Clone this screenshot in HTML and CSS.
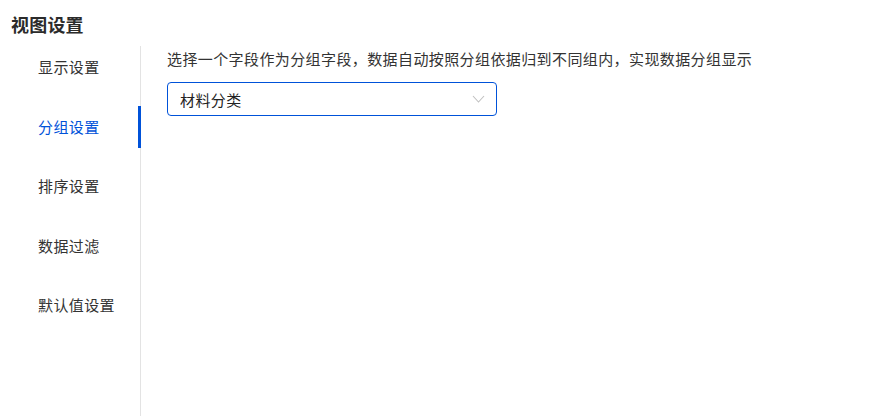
FILE: index.html
```html
<!DOCTYPE html>
<html lang="zh-CN">
<head>
    <meta charset="UTF-8">
    <title>视图设置</title>
    <link rel="stylesheet" href="styles.css">
</head>
<body>
    <div class="page">
        <h1 class="title">视图设置</h1>
        <div class="layout">
            <!-- 左侧菜单 -->
            <ul class="menu">
                <li class="menu-item">显示设置</li>
                <li class="menu-item active">分组设置</li>
                <li class="menu-item">排序设置</li>
                <li class="menu-item">数据过滤</li>
                <li class="menu-item">默认值设置</li>
            </ul>
            <!-- 分组设置内容 -->
            <div class="content">
                <p class="desc">选择一个字段作为分组字段，数据自动按照分组依据归到不同组内，实现数据分组显示</p>
                <div class="select">
                    <span class="select-value">材料分类</span>
                    <svg class="select-arrow" width="13" height="8" viewBox="0 0 13 8">
                        <path d="M1 1l5.5 6L12 1" fill="none" stroke="#c0c0c0" stroke-width="1.1"/>
                    </svg>
                </div>
            </div>
        </div>
    </div>
</body>
</html>
```

FILE: styles.css
```css
html, body {
    margin: 0;
    height: 100%;
    background-color: #fff;
}
body {
    font-family: "Noto Sans CJK SC", "Noto Sans", sans-serif;
    color: #333;
    font-size: 15px;
    letter-spacing: 0.4px;
}
.page {
    display: flex;
    flex-direction: column;
    height: 100%;
}
.title {
    margin: 0;
    padding: 11px 0 0 11px;
    height: 35px;
    font-size: 18px;
    line-height: 26px;
    font-weight: bold;
    letter-spacing: 0.2px;
    color: #2b2b2b;
}
.layout {
    flex: 1;
    display: flex;
}
.menu {
    list-style: none;
    margin: 0;
    padding: 0;
    width: 140px;
    border-right: 1px solid #e3e3e3;
    display: flex;
    flex-direction: column;
    gap: 17.6px;
}
.menu-item {
    position: relative;
    height: 42px;
    line-height: 42px;
    padding-left: 38px;
    color: #333;
}
.menu-item.active {
    color: #0052d9;
}
/* 选中项右侧的蓝色指示条 */
.menu-item.active::after {
    content: "";
    position: absolute;
    right: -1px;
    top: 0;
    width: 3px;
    height: 42px;
    background-color: #0052d9;
}
.content {
    flex: 1;
    padding-left: 26px;
}
.desc {
    margin: 0;
    line-height: 26px;
}
.select {
    margin-top: 10px;
    width: 330px;
    height: 34px;
    box-sizing: border-box;
    border: 1px solid #0052d9;
    border-radius: 4px;
    display: flex;
    align-items: center;
    justify-content: space-between;
    padding: 0 11px 0 12px;
}
.select-value {
    color: #222;
}
```
